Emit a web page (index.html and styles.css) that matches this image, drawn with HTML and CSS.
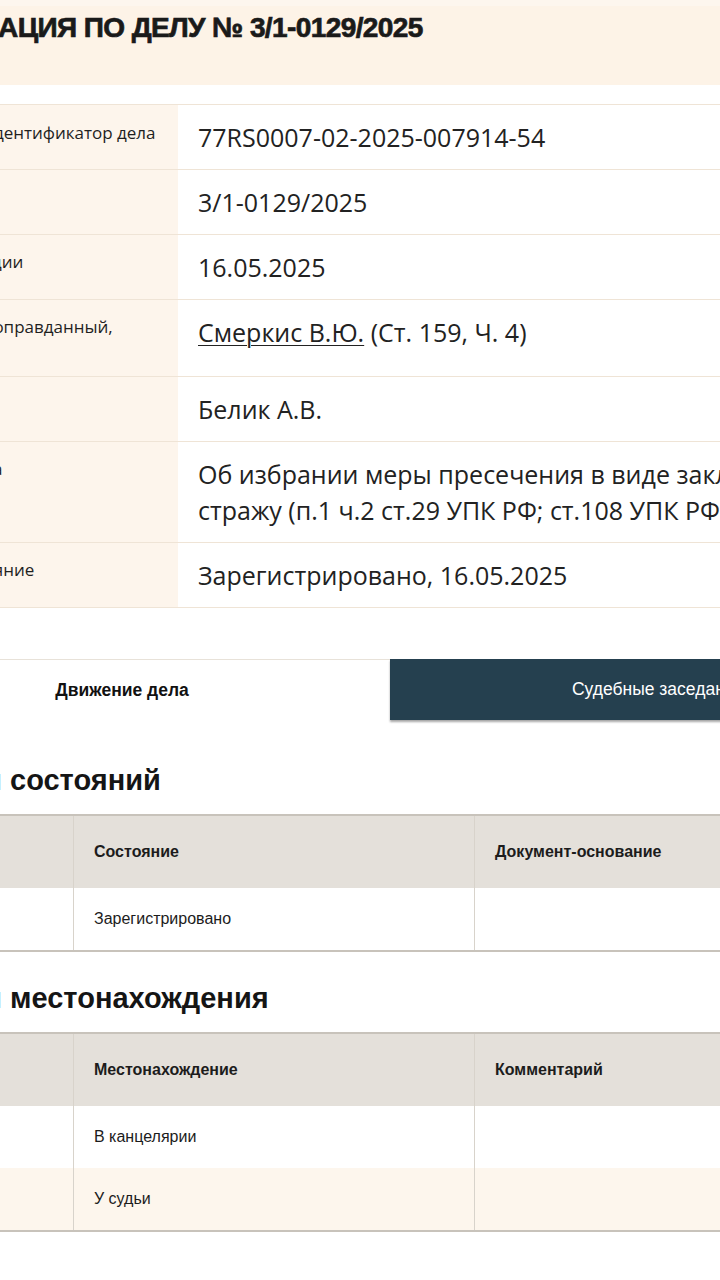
FILE: index.html
```html
<!DOCTYPE html>
<html lang="ru">
<head>
<meta charset="utf-8">
<title>Информация по делу № 3/1-0129/2025</title>
<link rel="stylesheet" href="styles.css">
</head>
<body>
<div class="page">
  <header class="band">
    <h1 class="title">Информация по делу № 3/1-0129/2025</h1>
  </header>

  <div class="info">
    <div class="row row-first">
      <div class="label">Уникальный идентификатор дела</div>
      <div class="value">77RS0007-02-2025-007914-54</div>
    </div>
    <div class="row">
      <div class="label">Номер дела</div>
      <div class="value">3/1-0129/2025</div>
    </div>
    <div class="row">
      <div class="label">Дата регистрации</div>
      <div class="value">16.05.2025</div>
    </div>
    <div class="row">
      <div class="label">Обвиняемый (оправданный, осужденный)</div>
      <div class="value"><a class="link" href="#">Смеркис В.Ю.</a> (Ст. 159, Ч. 4)</div>
    </div>
    <div class="row">
      <div class="label">Судья</div>
      <div class="value">Белик А.В.</div>
    </div>
    <div class="row">
      <div class="label">Категория дела</div>
      <div class="value">Об избрании меры пресечения в виде заключения под<br>стражу (п.1 ч.2 ст.29 УПК РФ; ст.108 УПК РФ)</div>
    </div>
    <div class="row">
      <div class="label">Текущее состояние</div>
      <div class="value">Зарегистрировано, 16.05.2025</div>
    </div>
  </div>

  <nav class="tabs">
    <div class="tab tab-active">Движение дела</div>
    <div class="tab tab-dark">Судебные заседания</div>
  </nav>

  <h2 class="heading">История состояний</h2>
  <div class="grid">
    <div class="cell head">Дата</div>
    <div class="cell head">Состояние</div>
    <div class="cell head">Документ-основание</div>
    <div class="cell">16.05.2025</div>
    <div class="cell">Зарегистрировано</div>
    <div class="cell"></div>
  </div>

  <h2 class="heading heading-2">История местонахождения</h2>
  <div class="grid">
    <div class="cell head">Дата</div>
    <div class="cell head">Местонахождение</div>
    <div class="cell head">Комментарий</div>
    <div class="cell">16.05.2025</div>
    <div class="cell">В канцелярии</div>
    <div class="cell"></div>
    <div class="cell alt">16.05.2025</div>
    <div class="cell alt">У судьи</div>
    <div class="cell alt"></div>
  </div>
</div>
</body>
</html>
```

FILE: styles.css
```css
html, body {
  margin: 0;
  padding: 0;
  background: #ffffff;
  overflow: hidden;
}

.page {
  width: 1100px;
  margin-left: -146px;
  color: #1c1c1c;
}

.band {
  height: 85px;
  background: #fdf3e7;
  border-top: 6px solid #fdf6ee;
  box-sizing: border-box;
}

.title {
  margin: 0;
  padding: 4px 0 0 20px;
  font-family: "Liberation Sans", Arial, sans-serif;
  font-weight: 900;
  font-size: 28px;
  line-height: 36px;
  letter-spacing: -0.6px;
  text-transform: uppercase;
  color: #1a1a1a;
  -webkit-text-stroke: 0.7px #1a1a1a;
}

.info {
  margin-top: 19px;
  border-top: 1px solid #efe4d6;
}

.row {
  display: grid;
  grid-template-columns: 324px 1fr;
  border-bottom: 1px solid #efe4d6;
}

.label {
  background: #fdf5ec;
  padding: 15px 20px 13px 20px;
  font-family: "Open Sans", "Noto Sans", sans-serif;
  font-size: 17px;
  line-height: 24px;
  color: #1f1f1f;
}

.value {
  padding: 14px 20px 14px 20px;
  font-family: "Open Sans", "Noto Sans", sans-serif;
  font-size: 25px;
  line-height: 36px;
  color: #222222;
}

.row-first .label {
  padding-top: 16px;
}

.link {
  color: #222222;
  text-decoration: underline;
  text-underline-offset: 3px;
  text-decoration-thickness: 1px;
}

.tabs {
  margin-top: 51px;
  display: grid;
  grid-template-columns: 536px 536px;
  height: 61px;
  font-family: "Liberation Sans", Arial, sans-serif;
  font-size: 17.5px;
}

.tab {
  display: flex;
  align-items: center;
  justify-content: center;
}

.tab-active {
  border-top: 1px solid #e8e2d9;
  font-weight: bold;
  color: #111111;
}

.tab-dark {
  background: #25404f;
  color: #ffffff;
  box-shadow: 0 2px 2px rgba(0, 0, 0, 0.35);
}

.heading {
  margin: 44px 0 18px 0;
  padding-left: 27px;
  font-family: "Liberation Sans", Arial, sans-serif;
  font-weight: bold;
  font-size: 29px;
  line-height: 32px;
  color: #151515;
}

.heading-2 {
  margin-top: 30px;
}

.grid {
  display: grid;
  grid-template-columns: 219px 401px 480px;
  border-top: 2px solid #c8c3bb;
  border-bottom: 2px solid #c8c3bb;
  font-family: "Liberation Sans", Arial, sans-serif;
  font-size: 16px;
  color: #1c1c1c;
}

.cell {
  height: 62px;
  padding-left: 20px;
  display: flex;
  align-items: center;
  border-left: 1px solid #d8d3cb;
  background: #ffffff;
}

.cell:nth-child(3n+1) {
  border-left: none;
}

.cell.head {
  height: 72px;
  background: #e4e0da;
  font-weight: bold;
}

.cell.alt {
  background: #fdf6ed;
}
```
